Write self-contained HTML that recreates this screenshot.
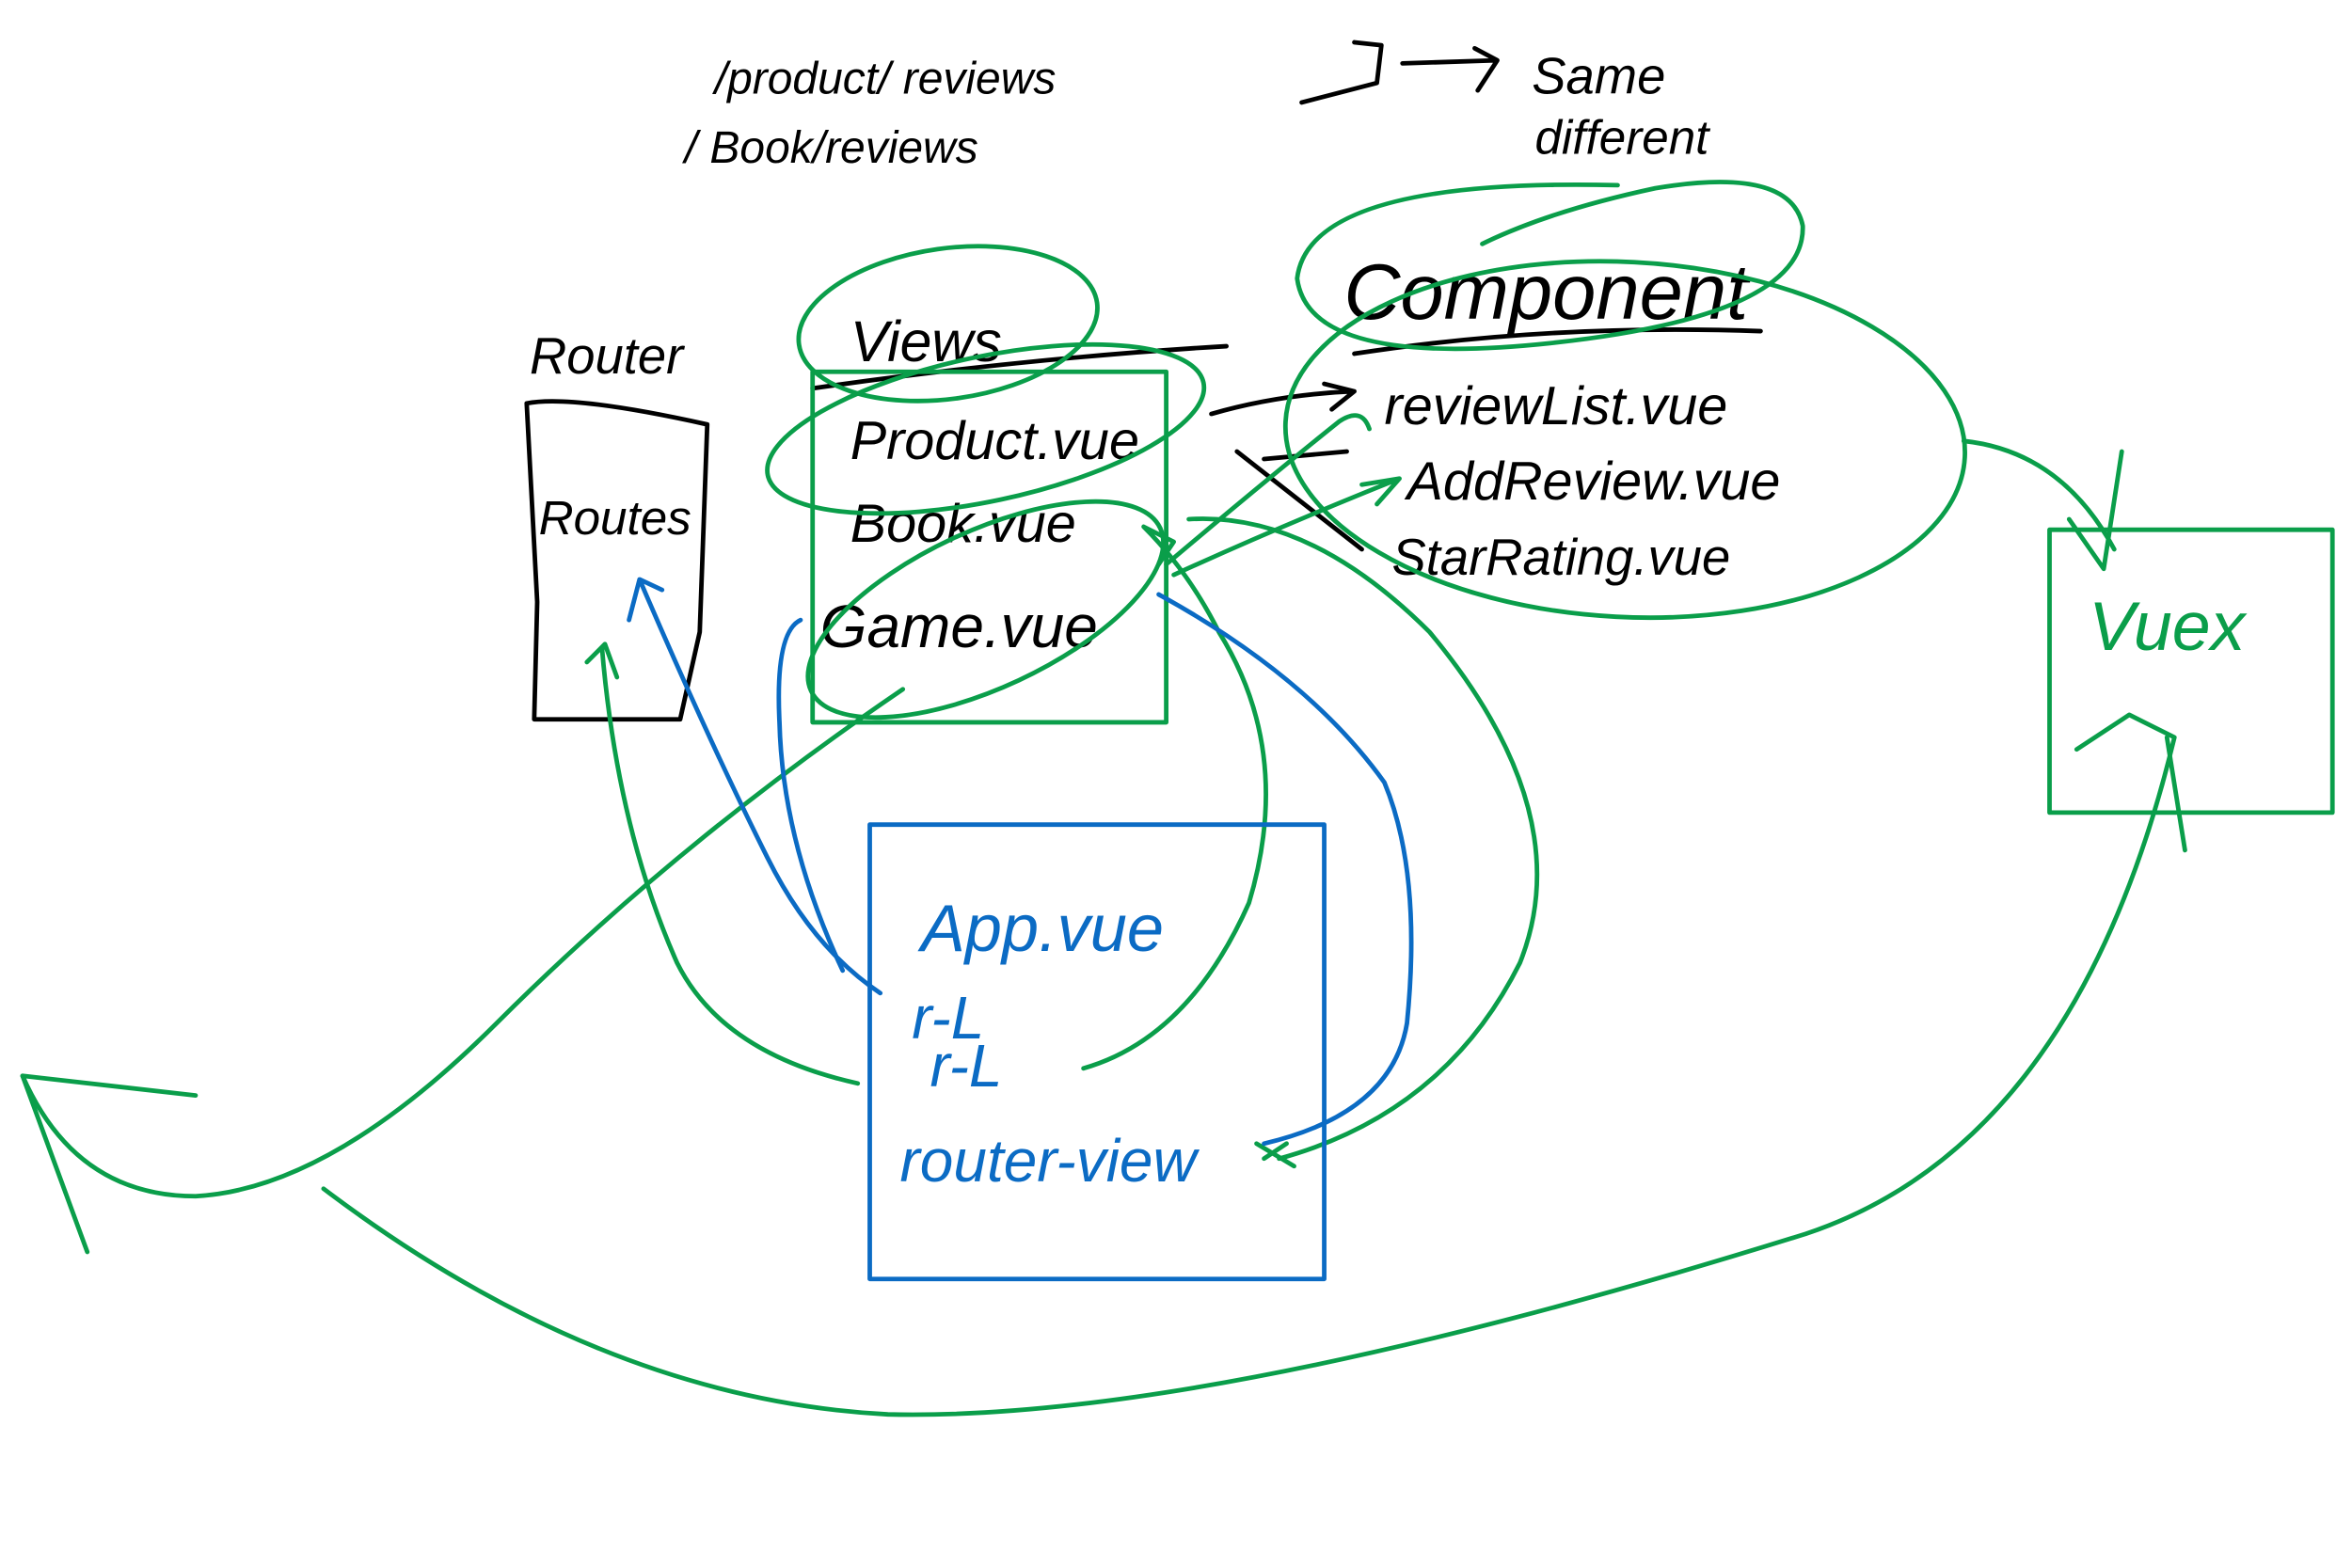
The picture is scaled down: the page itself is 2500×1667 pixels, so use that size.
<!DOCTYPE html>
<html><head><meta charset="utf-8"><style>
html,body{margin:0;padding:0;background:#fff;}
svg{display:block;}
text{font-family:"Liberation Sans",sans-serif;font-style:italic;}
</style></head><body>
<svg width="2500" height="1667" viewBox="0 0 1563 1042" xmlns="http://www.w3.org/2000/svg">
<rect width="1563" height="1042" fill="#fff"/>
<g fill="none" stroke-linecap="round" stroke-linejoin="round">
<!-- black -->
<g stroke="#000" stroke-width="3">
<path d="M865 68 L915 55 L918 30 L900 28"/>
<path d="M932 42 L995 40 M980 32 L995 40 L982 60"/>
<path d="M350 268 Q380 262 470 282 L465 420 L452 478 L355 478 L357 400 Z"/>
<path d="M540 258 Q680 238 815 230"/>
<path d="M900 235 Q1030 215 1170 220"/>
<path d="M805 275 Q850 262 900 260 M880 255 L900 260 L885 272"/>
<path d="M822 300 L905 365 M840 305 L895 300"/>
</g>
<g fill="#000" stroke="none" font-size="34">
<text x="475" y="62" font-size="30">/product/   reviews</text>
<text x="455" y="108" font-size="30">/ Book/reviews</text>
<text x="1018" y="62" font-size="34">Same</text>
<text x="1020" y="102" font-size="32">different</text>
<text x="352" y="248" font-size="34">Router</text>
<text x="358" y="355" font-size="32">Routes</text>
<text x="565" y="240" font-size="38">Views</text>
<text x="565" y="305" font-size="36">Product.vue</text>
<text x="565" y="360" font-size="36">Book.vue</text>
<text x="545" y="430" font-size="40">Game.vue</text>
<text x="893" y="212" font-size="52">Component</text>
<text x="920" y="282" font-size="36">reviewList.vue</text>
<text x="935" y="332" font-size="36">AddReview.vue</text>
<text x="925" y="382" font-size="34">StarRating.vue</text>
</g>
<!-- green -->
<g stroke="#0a9e4a" stroke-width="3">
<rect x="540" y="247" width="235" height="233"/>
<rect x="1362" y="352" width="188" height="188"/>
<ellipse cx="630" cy="215" rx="100" ry="50" transform="rotate(-8 630 215)"/>
<ellipse cx="655" cy="285" rx="148" ry="48" transform="rotate(-12 655 285)"/>
<ellipse cx="655" cy="405" rx="128" ry="52" transform="rotate(-25 655 405)"/>
<path d="M1075 123 Q870 118 862 185 Q870 245 1030 228 Q1200 210 1198 150 Q1190 110 1100 125 Q1030 140 985 162"/>
<ellipse cx="1080" cy="292" rx="226" ry="118" transform="rotate(3 1080 292)"/>
<path d="M215 790 Q400 930 590 940 Q800 945 1200 820 Q1380 760 1445 490 L1415 475 L1380 498"/>
<path d="M1440 490 L1452 565"/>
<path d="M600 458 Q450 560 330 680 Q220 790 130 795 Q50 795 15 715"/>
<path d="M15 715 L130 728 M15 715 L58 832"/>
<path d="M570 720 Q480 700 450 640 Q410 550 400 430 M390 440 L402 428 L410 450"/>
<path d="M720 710 Q790 690 830 600 Q860 500 810 420 Q790 380 760 350 L780 360 L770 375"/>
<path d="M850 770 Q960 740 1010 640 Q1050 540 950 420 Q870 340 790 345"/>
<path d="M835 760 L860 775 M840 770 L855 760"/>
<path d="M780 382 Q850 350 930 318 M905 322 L930 318 L915 335"/>
<path d="M775 375 Q840 320 890 280 Q905 270 910 285"/>
<path d="M1305 293 Q1370 300 1405 365 M1410 300 L1398 378 L1375 345"/>
</g>
<g fill="#0a9e4a" stroke="none"><text x="1388" y="432" font-size="46">Vuex</text></g>
<!-- blue -->
<g stroke="#0b6bc4" stroke-width="3">
<rect x="578" y="548" width="302" height="302"/>
<path d="M585 660 Q540 630 510 570 Q470 490 425 385 M418 412 L425 385 L440 392"/>
<path d="M532 412 Q515 420 518 480 Q520 560 560 645"/>
<path d="M770 395 Q870 450 920 520 Q945 580 935 680 Q925 740 840 760"/>
</g>
<g fill="#0b6bc4" stroke="none">
<text x="612" y="632" font-size="44">App.vue</text>
<text x="606" y="690" font-size="40">r-L</text>
<text x="618" y="722" font-size="40">r-L</text>
<text x="598" y="785" font-size="40">router-view</text>
</g>
</g>
</svg>
</body></html>
